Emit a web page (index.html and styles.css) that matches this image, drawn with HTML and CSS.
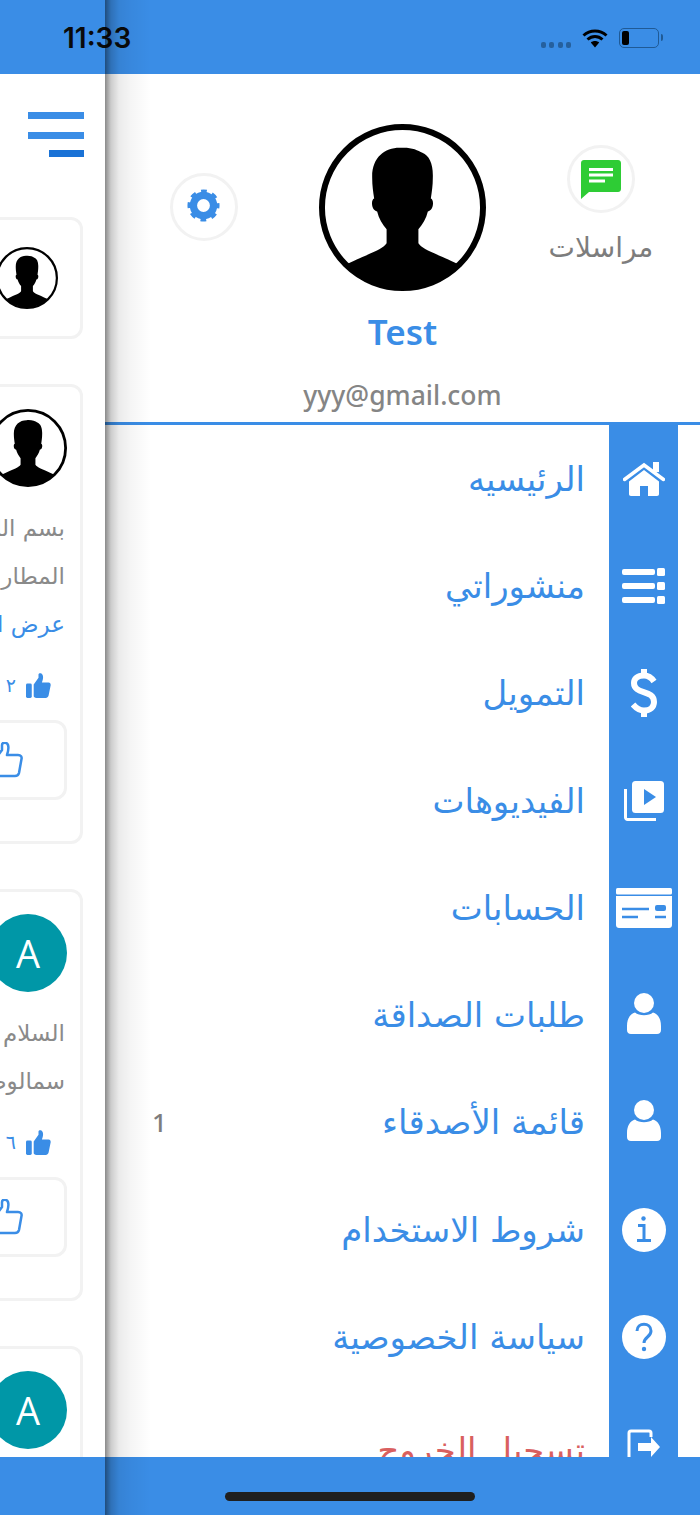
FILE: index.html
```html
<!DOCTYPE html>
<html lang="ar">
<head>
  <meta charset="UTF-8" />
  <meta name="viewport" content="width=device-width, initial-scale=1.0"/>
  <title>Test</title>
  <link rel="stylesheet" href="styles.css">
</head>
<body>

  <svg class="defs" width="0" height="0">
    <symbol id="avatar" viewBox="-84 -84 168 168">
      <circle r="81" fill="#fff" stroke="#000" stroke-width="6"/>
      <path d="M-3 -60C8 -61 15 -58 20 -55C27 -52 31 -44 30.500 -30C30.500 -22 29.500 -16 28.500 -9C32 -8 31.500 3 25.500 4C24 11 20 17 16 22L16 36C20 42 28 44 56 57A80 80 0 0 1 -56 57C-28 44 -20 42 -16 36L-16 22C-20 17 -24 11 -25.500 4C-31.500 3 -32 -8 -28.500 -9C-29.500 -16 -30.500 -22 -30.500 -30C-31 -50 -18 -60 -3 -60Z"/>
    </symbol>
    <symbol id="thumb" viewBox="0 0 26 26">
      <rect x="0" y="11" width="6" height="15" rx="1.500"/>
      <path d="M8 12L13 5V1.500C13 0 16 -.5 17 1.500C18.500 4 17.500 7 16.500 10H23.500C25.500 10 26 12 25.500 13.500L23.500 23.500C23 25 22 26 20.500 26H11C9 26 8 25 8 24Z"/>
    </symbol>
    <symbol id="thumb-line" viewBox="0 0 36 36">
      <path d="M2 16H9L15 8V3C15 0 20 0 21 3C22 6 21 10 20 13H31C34 13 35 15 34.500 17L32 31C31.500 33 30 34 28 34H9C6 34 3 33 2 33Z" fill="none" stroke="currentColor" stroke-width="2.500" stroke-linejoin="round"/>
    </symbol>
    <symbol id="person" viewBox="0 0 34 41">
      <circle cx="17" cy="10" r="10"/>
      <path d="M8 19.500C12 23 22 23 26 19.500C31 21 34 26 34 33V37C34 39.500 32.500 41 30 41H4C1.500 41 0 39.500 0 37V33C0 26 3 21 8 19.500Z"/>
    </symbol>
  </svg>

  <div class="app">
    <header class="top-bar">
      <span class="clock">11:33</span>
      <div class="status-icons">
        <span class="signal"><i></i><i></i><i></i><i></i></span>
        <svg class="wifi" viewBox="0 0 26 20">
          <path d="M1.500 7.500C8 1.500 18 1.500 24.500 7.500M5.500 11.500C10 7.500 16 7.500 20.500 11.500" fill="none" stroke="#000" stroke-width="3"/>
          <path d="M8.800 14.500C11 12.500 15 12.500 17.200 14.500L13 19.500Z"/>
        </svg>
        <span class="battery"><i></i></span>
      </div>
    </header>

    <main class="screen">
      <div class="behind">
        <div class="page" dir="rtl">
          <div class="burger"><i></i><i></i><i></i></div>

          <section class="card card-small">
            <svg class="avatar-small"><use href="#avatar"/></svg>
          </section>

          <section class="card">
            <svg class="avatar-post"><use href="#avatar"/></svg>
            <p class="post-text">بسم الله الرحمن الرحيم</p>
            <p class="post-text">المطار الدولي</p>
            <p class="post-text post-link">عرض المزيد</p>
            <div class="likes">
              <svg class="like-icon"><use href="#thumb"/></svg>
              <span>٢</span>
            </div>
            <div class="like-btn"><svg><use href="#thumb-line"/></svg></div>
          </section>

          <section class="card">
            <div class="avatar-letter">A</div>
            <p class="post-text">السلام عليكم</p>
            <p class="post-text">سمالوط</p>
            <div class="likes">
              <svg class="like-icon"><use href="#thumb"/></svg>
              <span>٦</span>
            </div>
            <div class="like-btn"><svg><use href="#thumb-line"/></svg></div>
          </section>

          <section class="card">
            <div class="avatar-letter">A</div>
          </section>
        </div>
      </div>

      <nav class="drawer">
        <div class="profile">
          <div class="profile-side profile-gear">
            <span class="round-btn">
              <svg class="gear" viewBox="0 0 36 36">
                <circle cx="18" cy="18" r="11" fill="none" stroke="#3a8de6" stroke-width="8"/>
                <circle cx="18" cy="18" r="15.500" fill="none" stroke="#3a8de6" stroke-width="4" stroke-dasharray="6.200 5.970" stroke-dashoffset="3.100"/>
              </svg>
            </span>
          </div>
          <div class="profile-main">
            <svg class="avatar-big"><use href="#avatar"/></svg>
            <div class="profile-name">Test</div>
            <div class="profile-mail">yyy@gmail.com</div>
          </div>
          <div class="profile-side profile-chat">
            <span class="round-btn">
              <svg class="chat" viewBox="0 0 40 39">
                <path d="M3 0H37C38.700 0 40 1.300 40 3V29C40 30.700 38.700 32 37 32H8L0 39V3C0 1.300 1.300 0 3 0Z" fill="#2ecc35"/>
                <path d="M8 9.500H32M8 15H32M8 21H24" stroke="#fff" stroke-width="3"/>
              </svg>
            </span>
            <span class="chat-label">مراسلات</span>
          </div>
        </div>

        <ul class="menu" dir="rtl">
          <li class="menu-row">
            <span class="menu-icon">
              <svg width="42" height="34" viewBox="0 0 42 34" fill="#fff">
                <path d="M1.500 17.500L21 3L40.500 17.500" fill="none" stroke="#fff" stroke-width="3.500" stroke-linecap="round"/>
                <rect x="30" y="0" width="6" height="10"/>
                <path d="M6 19.500L21 8L36 19.500V32C36 33.300 35.300 34 34 34H25V24H17V34H8C6.700 34 6 33.300 6 32Z"/>
              </svg>
            </span>
            <span class="menu-label">الرئيسيه</span>
          </li>
          <li class="menu-row">
            <span class="menu-icon">
              <svg width="45" height="36" viewBox="0 0 45 36" fill="#fff">
                <rect x="1" y="1" width="33" height="6" rx="2"/><rect x="36" y="0" width="8" height="8" rx="1.500"/>
                <rect x="1" y="15" width="33" height="6" rx="2"/><rect x="36" y="14" width="8" height="8" rx="1.500"/>
                <rect x="1" y="29" width="33" height="6" rx="2"/><rect x="36" y="28" width="8" height="8" rx="1.500"/>
              </svg>
            </span>
            <span class="menu-label">منشوراتي</span>
          </li>
          <li class="menu-row">
            <span class="menu-icon">
              <svg width="26" height="48" viewBox="0 0 26 48" fill="none" stroke="#fff">
                <path d="M23 12.500C20 8 16 6.500 13 6.500C6 6.500 3 10 3 14C3 26 23 20 23 33C23 38 19 41.500 13 41.500C8 41.500 5 39 2 35.500" stroke-width="6"/>
                <path d="M13 0V7M13 41V48" stroke-width="6"/>
              </svg>
            </span>
            <span class="menu-label">التمويل</span>
          </li>
          <li class="menu-row">
            <span class="menu-icon">
              <svg width="40" height="40" viewBox="0 0 40 40" fill="#fff">
                <path d="M1.500 8V36.500C1.500 37.500 2.500 38.500 3.500 38.500H32" fill="none" stroke="#fff" stroke-width="3"/>
                <rect x="8" y="0" width="32" height="32" rx="3.500"/>
                <path d="M20 8L32 16L20 24Z" fill="#3a8de6"/>
              </svg>
            </span>
            <span class="menu-label">الفيديوهات</span>
          </li>
          <li class="menu-row">
            <span class="menu-icon">
              <svg width="56" height="40" viewBox="0 0 56 40" fill="#fff">
                <rect x="0" y="0" width="56" height="6.500" rx="1.500"/>
                <path d="M0 8H56V37C56 38.700 54.700 40 53 40H3C1.300 40 0 38.700 0 37Z"/>
                <path d="M6 21H33M6 29H22M39 29H50" stroke="#3a8de6" stroke-width="2.500"/>
                <rect x="39" y="17" width="11" height="6" rx="2" fill="#3a8de6"/>
              </svg>
            </span>
            <span class="menu-label">الحسابات</span>
          </li>
          <li class="menu-row">
            <span class="menu-icon"><svg class="icon-person" fill="#fff"><use href="#person"/></svg></span>
            <span class="menu-label">طلبات الصداقة</span>
          </li>
          <li class="menu-row">
            <span class="menu-icon"><svg class="icon-person" fill="#fff"><use href="#person"/></svg></span>
            <span class="menu-label">قائمة الأصدقاء</span>
            <span class="menu-badge">1</span>
          </li>
          <li class="menu-row">
            <span class="menu-icon">
              <svg width="44" height="44" viewBox="0 0 44 44">
                <circle cx="22" cy="22" r="22" fill="#fff"/>
                <circle cx="21.500" cy="10.500" r="2.200" fill="#3a8de6"/>
                <path d="M16 17.500H22V32M15 32.500H29" fill="none" stroke="#3a8de6" stroke-width="3"/>
              </svg>
            </span>
            <span class="menu-label">شروط الاستخدام</span>
          </li>
          <li class="menu-row">
            <span class="menu-icon">
              <svg width="44" height="44" viewBox="0 0 44 44">
                <circle cx="22" cy="22" r="22" fill="#fff"/>
                <path d="M15 16C15 7 29 7 29 16C29 22 22 22 22 28" fill="none" stroke="#3a8de6" stroke-width="3"/>
                <circle cx="22" cy="34" r="2.200" fill="#3a8de6"/>
              </svg>
            </span>
            <span class="menu-label">سياسة الخصوصية</span>
          </li>
          <li class="menu-row">
            <span class="menu-icon">
              <svg class="icon-logout" width="34" height="36" viewBox="0 0 34 36" fill="#fff">
                <path d="M2 34V4C2 2.800 2.800 2 4 2H22C23.200 2 24 2.800 24 4V8" fill="none" stroke="#fff" stroke-width="3"/>
                <path d="M11 14H24V8L33 18L24 28V22H11Z"/>
              </svg>
            </span>
            <span class="menu-label menu-logout">تسجيل الخروج</span>
          </li>
        </ul>
      </nav>
    </main>

    <footer class="bottom-bar"><span class="home-line"></span></footer>

    <div class="drawer-shadow"></div>
  </div>

</body>
</html>
```

FILE: styles.css
```css
html, body {
  margin: 0;
  padding: 0;
  height: 100%;
  font-family: "DejaVu Sans", sans-serif;
  background: #fff;
}

.defs {
  position: absolute;
}

.app {
  position: relative;
  width: 700px;
  height: 1515px;
  display: flex;
  flex-direction: column;
  overflow: hidden;
}

/* bars */
.top-bar {
  height: 74px;
  flex: none;
  background: #3a8de6;
  display: flex;
  justify-content: space-between;
  align-items: center;
  padding: 2px 41px 0 63px;
  box-sizing: border-box;
  position: relative;
  z-index: 2;
}

.clock {
  font-family: Inter, sans-serif;
  font-size: 28px;
  font-weight: 600;
  color: #0a0a0a;
}

.status-icons {
  display: flex;
  align-items: center;
}

.signal {
  display: flex;
  gap: 3.500px;
  margin: 13px 11px 0 0;
}

.signal i {
  width: 5px;
  height: 6px;
  border-radius: 2px;
  background: #25609e;
}

.wifi {
  width: 26px;
  height: 20px;
  margin-right: 11px;
}

.battery {
  width: 40px;
  height: 20px;
  box-sizing: border-box;
  border: 1.500px solid #1f5a96;
  border-radius: 5px;
  padding: 2px;
  position: relative;
}

.battery::after {
  content: '';
  position: absolute;
  right: -5px;
  top: 5px;
  width: 2px;
  height: 7px;
  background: #1f5a96;
  border-radius: 0 2px 2px 0;
}

.battery i {
  display: block;
  width: 7px;
  height: 100%;
  background: #000;
  border-radius: 2px;
}

.bottom-bar {
  height: 58px;
  flex: none;
  background: #3a8de6;
  display: flex;
  justify-content: center;
  position: relative;
  z-index: 2;
}

.home-line {
  width: 250px;
  height: 9px;
  margin-top: 35px;
  border-radius: 5px;
  background: #1f1f1f;
}

.drawer-shadow {
  position: absolute;
  top: 0;
  bottom: 0;
  left: 105px;
  width: 46px;
  z-index: 3;
  background: linear-gradient(90deg, rgba(0,0,0,0.46), rgba(0,0,0,0.2) 6px, rgba(0,0,0,0.08) 14px, rgba(0,0,0,0.04) 26px, rgba(0,0,0,0));
  pointer-events: none;
}

.screen {
  flex: 1;
  min-height: 0;
  display: flex;
  overflow: hidden;
}

/* page under the drawer */
.behind {
  width: 105px;
  flex: none;
  overflow: hidden;
}

.page {
  width: 700px;
  margin-left: -595px;
  padding: 38px 22px 0 0;
  box-sizing: border-box;
}

.burger {
  width: 56px;
  margin: 0 -1px 60px 0;
  display: flex;
  flex-direction: column;
  align-items: flex-end;
  gap: 12.500px;
  direction: ltr;
}

.burger i {
  display: block;
  width: 100%;
  height: 7px;
  background: #3a8de6;
}

.burger i:last-child {
  width: 35px;
  margin-top: -1px;
  background: #1a72d6;
}

.card {
  border: 3px solid #f2f2f2;
  border-radius: 12px;
  padding: 22px 13px 41px;
  margin-bottom: 45px;
}

.card-small {
  height: 116px;
  padding: 0 22px;
  display: flex;
  align-items: center;
}

.avatar-small {
  width: 62px;
  height: 62px;
  display: block;
}

.avatar-post {
  width: 78px;
  height: 78px;
  display: block;
}

.avatar-letter {
  width: 78px;
  height: 78px;
  border-radius: 50%;
  background: #0097a7;
  color: #fff;
  font-family: "Open Sans", sans-serif;
  font-size: 38px;
  line-height: 78px;
  text-align: center;
}

.post-text {
  margin: 0;
  padding-right: 2px;
  font-size: 23px;
  line-height: 48px;
  color: #8a8a8a;
  white-space: nowrap;
}

.avatar-post + .post-text,
.avatar-letter + .post-text {
  margin-top: 17px;
}

.post-link {
  color: #3a8de6;
}

.likes {
  height: 30px;
  margin: 22px 16px 20px 0;
  display: flex;
  align-items: center;
  gap: 10px;
  color: #3a8de6;
  font-size: 19px;
}

.like-icon {
  width: 25px;
  height: 25px;
  fill: #3a8de6;
}

.like-btn {
  height: 74px;
  border: 3px solid #f2f2f2;
  border-radius: 12px;
  padding-right: 41px;
  display: flex;
  align-items: center;
  color: #3a8de6;
}

.like-btn svg {
  width: 36px;
  height: 36px;
}

/* drawer */
.drawer {
  flex: 1;
  min-width: 0;
  background: #fff;
}

.profile {
  height: 351px;
  box-sizing: border-box;
  display: grid;
  grid-template-columns: 198px 1fr 198px;
  border-bottom: 3px solid #3a8de6;
}

.profile-side {
  display: flex;
  flex-direction: column;
  align-items: center;
}

.profile-gear {
  padding-top: 99px;
}

.profile-chat {
  padding-top: 71px;
}

.round-btn {
  width: 68px;
  height: 68px;
  box-sizing: border-box;
  border: 3px solid #f2f2f2;
  border-radius: 50%;
  display: flex;
  align-items: center;
  justify-content: center;
}

.gear {
  width: 33px;
  height: 33px;
  margin: -3px 1px 0 0;
}

.chat {
  width: 40px;
  height: 39px;
}

.chat-label {
  margin-top: 16px;
  font-size: 28px;
  line-height: 38px;
  color: #7d7d7d;
}

.profile-main {
  padding-top: 50px;
  display: flex;
  flex-direction: column;
  align-items: center;
}

.avatar-big {
  width: 167px;
  height: 167px;
  display: block;
}

.profile-name {
  margin-top: 20px;
  font-family: "Noto Sans", sans-serif;
  font-size: 35px;
  font-weight: 600;
  line-height: 42px;
  color: #3a8de6;
}

.profile-mail {
  margin-top: 26px;
  font-family: "Noto Sans", sans-serif;
  font-size: 26.500px;
  font-weight: 500;
  line-height: 32px;
  color: #858585;
}

.menu {
  list-style: none;
  margin: 0;
  padding: 0;
}

.menu-row {
  height: 107.300px;
  padding-right: 22px;
  display: flex;
  align-items: center;
}

.menu-icon {
  width: 69px;
  height: 100%;
  flex: none;
  background: #3a8de6;
  display: flex;
  align-items: center;
  justify-content: center;
}

.menu-label {
  margin-right: 24px;
  font-size: 34px;
  color: #3a8de6;
  white-space: nowrap;
}

.menu-logout {
  margin-top: 12px;
  color: #d9605f;
}

.icon-logout {
  margin-top: 6px;
}

.menu-badge {
  margin-right: auto;
  margin-left: 47px;
  font-family: "Noto Sans", sans-serif;
  font-size: 26px;
  font-weight: 500;
  color: #7d7d7d;
}

.icon-person {
  width: 34px;
  height: 41px;
  margin: -3px 0 0 1px;
}
```
